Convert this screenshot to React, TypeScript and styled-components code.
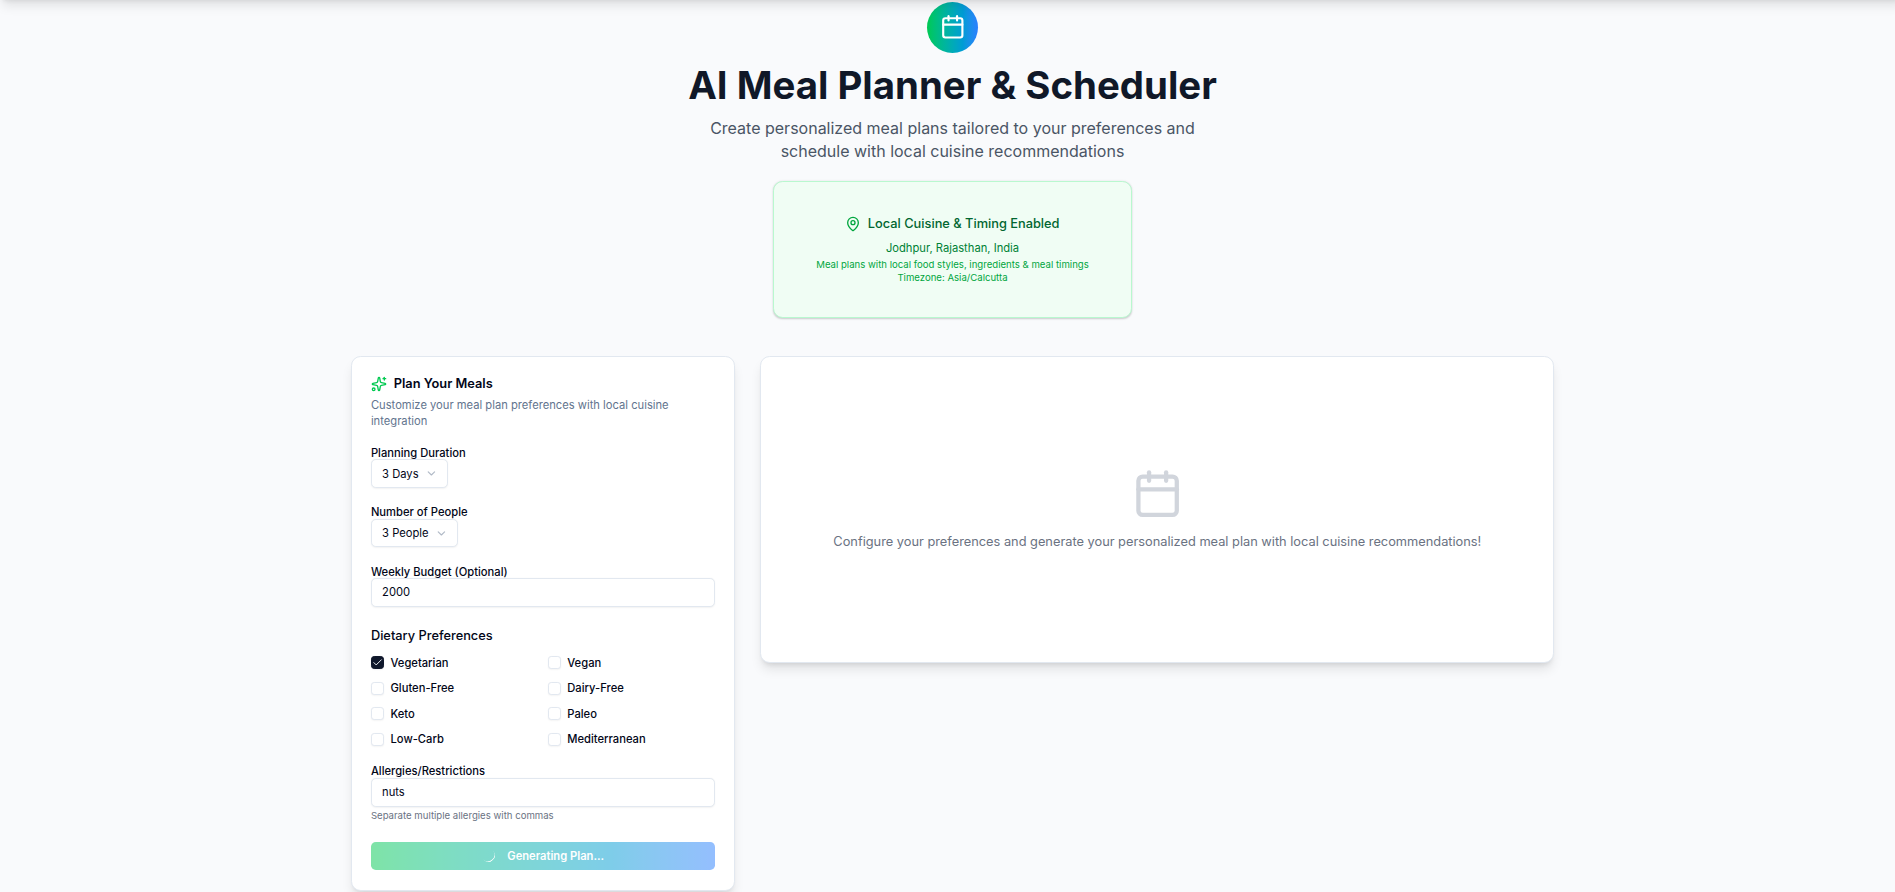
import React from "react";
import styled, { createGlobalStyle } from "styled-components";
import { Calendar, Check, ChevronDown, MapPin, Sparkles } from "lucide-react";

const GlobalStyle = createGlobalStyle`
  *, *::before, *::after { box-sizing: border-box; }
  html, body { margin: 0; height: 100%; overflow: hidden; background: #f9fafc; }
  body { font-family: Inter, "Liberation Sans", sans-serif; color: #020618; }
  h1, h2, p { margin: 0; font-weight: inherit; }
  svg { display: block; flex-shrink: 0; }
`;

const Page = styled.div`
  height: 892px;
  overflow: hidden;
  padding-left: 10px;
  background: #f9fafc;
`;

const HeaderShadow = styled.div`
  position: absolute;
  top: -20px;
  left: 0;
  right: -10px;
  height: 20px;
  box-shadow: 0 8px 12px -2.4px rgba(0, 0, 0, 0.1), 0 3.2px 4.8px -3.2px rgba(0, 0, 0, 0.1);
`;

const Container = styled.main`
  width: 1203.2px;
  margin: 0 auto;
  padding-top: 1.6px;
`;

const Hero = styled.header`
  display: flex;
  flex-direction: column;
  align-items: center;
  text-align: center;
  height: 354.4px;
`;

const Badge = styled.div`
  display: grid;
  place-items: center;
  width: 51.2px;
  height: 51.2px;
  border-radius: 50%;
  color: #fff;
  background: linear-gradient(to right in oklab, #00c950, #2b7fff);
`;

const Title = styled.h1`
  margin-top: 12.8px;
  font-size: 38.4px;
  line-height: 38.4px;
  font-weight: 700;
  color: #101828;
`;

const Subtitle = styled.p`
  width: 537.6px;
  margin-top: 12.8px;
  font-size: 16px;
  line-height: 23px;
  color: #4a5565;
`;

const LocationCard = styled.section`
  display: flex;
  flex-direction: column;
  align-items: center;
  width: 358.4px;
  height: 137px;
  margin-top: 18.2px;
  padding-top: 32px;
  border: 1px solid #b9f8cf;
  border-radius: 9.6px;
  background: #f0fdf4;
  box-shadow: 0 0.8px 2.4px rgba(0, 0, 0, 0.1), 0 0.8px 1.6px -0.8px rgba(0, 0, 0, 0.1);
`;

const LocationTitle = styled.div`
  display: flex;
  align-items: center;
  gap: 6.4px;
  font-size: 12.8px;
  line-height: 19.2px;
  font-weight: 500;
  color: #016630;
  svg { margin-top: 0.8px; color: #00a63e; }
`;

const Place = styled.p`
  margin-top: 7.2px;
  font-size: 11.2px;
  line-height: 16px;
  color: #008236;
`;

const LocationNote = styled.p`
  font-size: 9.6px;
  line-height: 12.8px;
  color: #00a63e;
`;

const Notes = styled.div`
  margin-top: 3px;
`;

const Columns = styled.div`
  display: grid;
  grid-template-columns: 384px 793.6px;
  gap: 25.6px;
  align-items: start;
`;

const Card = styled.section`
  border: 1px solid #e2e8f0;
  border-radius: 9.6px;
  background: #fff;
  box-shadow: 0 8px 12px -2.4px rgba(0, 0, 0, 0.1), 0 3.2px 4.8px -3.2px rgba(0, 0, 0, 0.1);
`;

const FormCard = styled(Card)`
  height: 535px;
  padding: 19px;
`;

const CardTitle = styled.h2`
  display: flex;
  align-items: center;
  gap: 6.8px;
  height: 16px;
  font-size: 12.8px;
  font-weight: 600;
  svg { color: #00c950; }
`;

const Description = styled.p`
  margin-top: 5px;
  font-size: 11.2px;
  line-height: 16px;
  color: #62748e;
`;

const Field = styled.div<{ $top: number }>`
  display: flex;
  flex-direction: column;
  align-items: flex-start;
  margin-top: ${(p) => p.$top}px;
`;

const Label = styled.label`
  height: 12.4px;
  font-size: 11.2px;
  line-height: 13px;
  font-weight: 500;
`;

const Control = styled.div<{ $wide?: boolean }>`
  display: flex;
  align-items: center;
  gap: 6.4px;
  width: ${(p) => (p.$wide ? "100%" : "auto")};
  height: 28.8px;
  padding: 0 ${(p) => (p.$wide ? 10.2 : 9.4)}px 0 10.2px;
  border: 1px solid #e2e8f0;
  border-radius: 4.8px;
  background: #fff;
  font-size: 11.2px;
  box-shadow: 0 0.8px 1.6px rgba(0, 0, 0, 0.05);
  svg { opacity: 0.5; color: #62748e; }
`;

const GroupTitle = styled.h2`
  margin-top: 18.8px;
  font-size: 12.8px;
  line-height: 19.2px;
  font-weight: 500;
`;

const Options = styled.div`
  display: grid;
  grid-template-columns: 1fr 1fr;
  gap: 9.6px;
  margin-top: 9.8px;
`;

const Option = styled.div`
  display: flex;
  align-items: center;
  gap: 6.8px;
  height: 16px;
  font-size: 11.2px;
  font-weight: 500;
`;

const Box = styled.span<{ $checked: boolean }>`
  display: grid;
  place-items: center;
  width: 12.8px;
  height: 12.8px;
  border: 1px solid ${(p) => (p.$checked ? "#0f172b" : "#e2e8f0")};
  border-radius: 3.2px;
  background: ${(p) => (p.$checked ? "#0f172b" : "#fff")};
  color: #f8fafc;
  box-shadow: 0 0.8px 1.6px rgba(0, 0, 0, 0.05);
`;

const Hint = styled.p`
  margin-top: 3.4px;
  font-size: 9.6px;
  line-height: 12.8px;
  color: #6a7282;
`;

const GenerateButton = styled.button`
  display: flex;
  align-items: center;
  justify-content: center;
  gap: 12.8px;
  width: 100%;
  height: 28px;
  margin-top: 19px;
  padding: 0;
  border: 0;
  border-radius: 4.8px;
  font: 600 11.2px Inter, sans-serif;
  color: #fff;
  background: linear-gradient(to right in oklab, #00c950, #2b7fff);
  opacity: 0.5;
`;

const Spinner = styled.span`
  width: 12.8px;
  height: 12.8px;
  border-radius: 50%;
  border-bottom: 1.6px solid #fff;
  transform: rotate(-40deg);
`;

const EmptyCard = styled(Card)`
  display: flex;
  flex-direction: column;
  align-items: center;
  height: 307px;
  margin-left: -0.8px;
  padding: 111px 0 0 0.8px;
  svg { color: #d1d5dc; }
`;

const EmptyText = styled.p`
  margin-top: 12.8px;
  font-size: 12.8px;
  line-height: 19.2px;
  color: #6a7282;
`;

const preferences = [
  "Vegetarian",
  "Vegan",
  "Gluten-Free",
  "Dairy-Free",
  "Keto",
  "Paleo",
  "Low-Carb",
  "Mediterranean",
];

export default function App() {
  return (
    <Page>
      <GlobalStyle />
      <HeaderShadow />
      <Container>
        <Hero>
          <Badge>
            <Calendar size={25.6} />
          </Badge>
          <Title>AI Meal Planner &amp; Scheduler</Title>
          <Subtitle>
            Create personalized meal plans tailored to your preferences and schedule with local cuisine
            recommendations
          </Subtitle>
          <LocationCard>
            <LocationTitle>
              <MapPin size={16} />
              Local Cuisine &amp; Timing Enabled
            </LocationTitle>
            <Place>Jodhpur, Rajasthan, India</Place>
            <Notes>
              <LocationNote>Meal plans with local food styles, ingredients &amp; meal timings</LocationNote>
              <LocationNote>Timezone: Asia/Calcutta</LocationNote>
            </Notes>
          </LocationCard>
        </Hero>
        <Columns>
          <FormCard>
            <CardTitle>
              <Sparkles size={16} />
              Plan Your Meals
            </CardTitle>
            <Description>Customize your meal plan preferences with local cuisine integration</Description>
            <Field $top={17.8}>
              <Label>Planning Duration</Label>
              <Control>
                3 Days
                <ChevronDown size={12.8} />
              </Control>
            </Field>
            <Field $top={18.2}>
              <Label>Number of People</Label>
              <Control>
                3 People
                <ChevronDown size={12.8} />
              </Control>
            </Field>
            <Field $top={18.2}>
              <Label>Weekly Budget (Optional)</Label>
              <Control $wide>2000</Control>
            </Field>
            <GroupTitle>Dietary Preferences</GroupTitle>
            <Options>
              {preferences.map((name) => (
                <Option key={name}>
                  <Box $checked={name === "Vegetarian"}>
                    {name === "Vegetarian" && <Check size={11.2} />}
                  </Box>
                  {name}
                </Option>
              ))}
            </Options>
            <Field $top={18.2}>
              <Label>Allergies/Restrictions</Label>
              <Control $wide>nuts</Control>
              <Hint>Separate multiple allergies with commas</Hint>
            </Field>
            <GenerateButton disabled>
              <Spinner />
              Generating Plan...
            </GenerateButton>
          </FormCard>
          <EmptyCard>
            <Calendar size={51.2} />
            <EmptyText>
              Configure your preferences and generate your personalized meal plan with local cuisine
              recommendations!
            </EmptyText>
          </EmptyCard>
        </Columns>
      </Container>
    </Page>
  );
}
